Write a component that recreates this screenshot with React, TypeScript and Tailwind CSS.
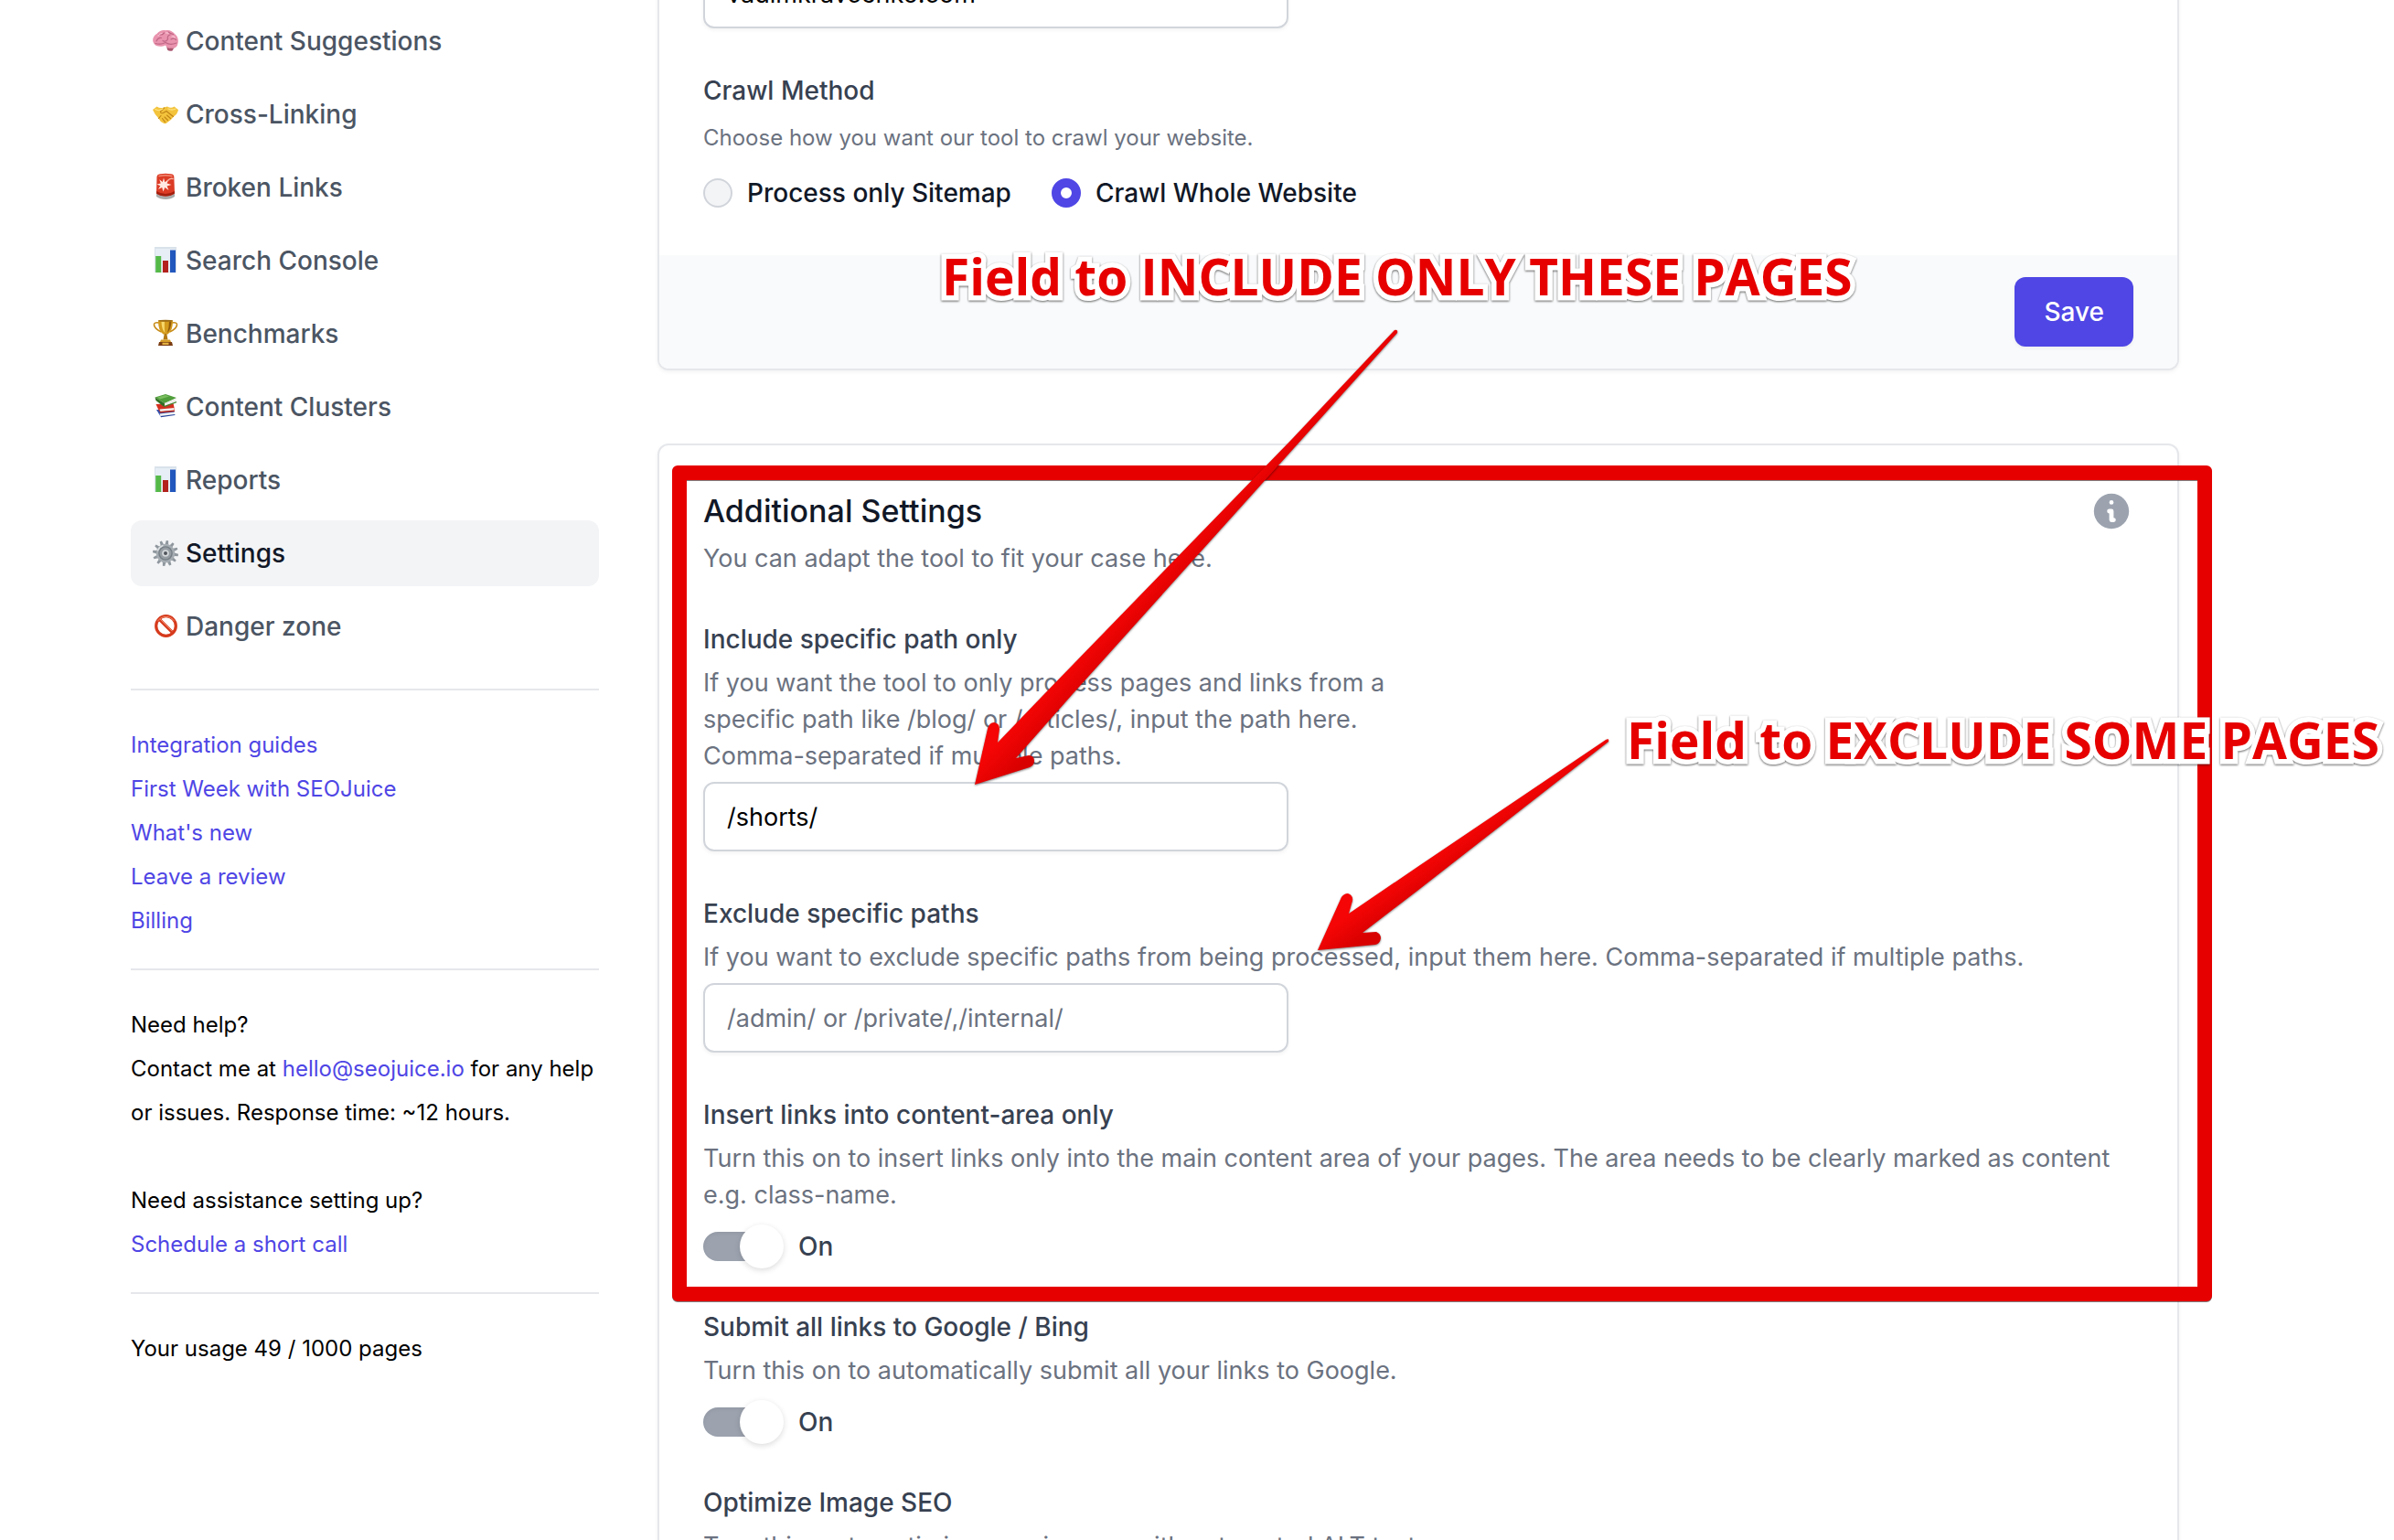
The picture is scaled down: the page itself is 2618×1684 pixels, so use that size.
import { useState } from "react";
import type { ReactNode } from "react";

const BrainIcon = () => (
  <svg viewBox="0 0 28 28" className="size-7 shrink-0 overflow-visible" aria-hidden="true">
    <path d="M15 19 L16 23.5 Q18 25.5 21.5 24.5 L24 20 Z" fill="#a8566f" />
    <path
      d="M1 16 C-1 12 1 8 4.5 6 C7 2.5 11 1.5 14 2.2 C18 1.2 22 3 24 6 C27 8 29 13 27.3 17 C27 20.5 23.5 22.5 20 21.5 C17 22.5 15 20.5 14 18.5 C10 20.5 3 20.5 1 16 Z"
      fill="#e993ae"
    />
    <path
      d="M4 14 Q6 9.5 9.5 10.5 M7 6.5 Q10 8 12.5 5 M11 13.5 Q14 15.5 16.5 12 Q15.5 8 19 7 M17 4 Q19.5 6 22.5 6.5 M20 12 Q23 10 25.5 12.5 M3 16.5 Q9 18 14 15.5 Q19 19 26 16"
      fill="none"
      stroke="#bf6685"
      strokeWidth="1.2"
      strokeLinecap="round"
    />
    <path d="M6 8 Q8 5.5 10 5.5 M14.5 5 Q16.5 4.5 17 5.5 M21 9 Q23 8.5 24 10" fill="none" stroke="#f9c6d6" strokeWidth="1.2" strokeLinecap="round" />
  </svg>
);

const HandshakeIcon = () => (
  <svg viewBox="0 0 28 28" className="size-7 shrink-0 overflow-visible" aria-hidden="true">
    <path
      d="M0 9 L4.5 5.5 Q8 8 12 6.5 L16 5.5 Q20 8 23.5 5.5 L28 9 Q27 14 23.5 16 Q20 20.5 16.5 22.5 Q14 25.5 11.5 23.5 Q8 22 6.5 18.5 Q2 14 0 9 Z"
      fill="#f3c33c"
    />
    <path
      d="M12.5 7 L8.5 11 Q8.5 13.5 11.5 12.5 L15 10.5 Q19 14 22.5 16.5 M15.5 15 L19.5 18.5 M13 17 L16.5 20.5 M10.5 18.5 L13.5 22.5 M6.5 18.5 L9 15.5"
      fill="none"
      stroke="#bf8315"
      strokeWidth="1.1"
      strokeLinecap="round"
    />
    <path d="M3 8.5 Q7 11 11 8 M17 8 Q21 10 25 8" fill="none" stroke="#fde07c" strokeWidth="1.3" strokeLinecap="round" />
  </svg>
);

const SirenIcon = () => (
  <svg viewBox="0 0 28 28" className="size-7 shrink-0 overflow-visible" aria-hidden="true">
    <path d="M4 20.5 H24 V24 Q20 27 14 27 Q8 27 4 24 Z" fill="#a9abab" />
    <path d="M4.5 2 Q5 -0.5 8 -0.8 Q14 -1.6 20 -0.8 Q23 -0.5 23.3 2 L24 20.5 Q20 23.5 14 23.5 Q8 23.5 4 20.5 Z" fill="#dc3b25" />
    <path d="M4 18 Q9 21 14 21 Q19 21 24 18 V20.5 Q20 23.5 14 23.5 Q8 23.5 4 20.5 Z" fill="#a4200f" />
    <path d="M7 1.5 Q14 0 21 1.5" fill="none" stroke="#f28b74" strokeWidth="1.4" strokeLinecap="round" />
    <path d="M12 3.5 L13.3 8.2 L17 5.5 L15.6 9.6 L20.5 11 L15.6 12.6 L17.5 17 L13.3 14 L11.5 18.5 L10.2 14 L6 16 L8.3 12.2 L4.5 10.5 L8.8 9.4 L7.3 5.3 L10.8 8 Z" fill="#ffe9e2" />
    <path d="M16 7 Q19 3.5 22 4.5" fill="none" stroke="#f7b3a2" strokeWidth="1.4" strokeLinecap="round" />
  </svg>
);

const ChartIcon = () => (
  <svg viewBox="0 0 28 28" className="size-7 shrink-0 overflow-visible" aria-hidden="true">
    <rect x="2" y="-1" width="24" height="28" fill="#d9e2ea" />
    <rect x="3" y="1" width="22" height="25" fill="#e7eef5" />
    <rect x="3.2" y="9" width="6" height="18" fill="#54b948" />
    <rect x="11" y="14" width="6" height="13" fill="#b3221c" />
    <rect x="19" y="2.5" width="6" height="24.5" fill="#2257bd" />
  </svg>
);

const TrophyIcon = () => (
  <svg viewBox="0 0 28 28" className="size-7 shrink-0 overflow-visible" aria-hidden="true">
    <path d="M7 2 Q1 1 1.5 4.5 Q2.5 9 9.5 12 M21 2 Q27 1 26.5 4.5 Q25.5 9 18.5 12" fill="none" stroke="#c68a17" strokeWidth="1.6" />
    <path d="M6 -0.5 H22 Q22 11 16.5 14.5 H11.5 Q6 11 6 -0.5 Z" fill="#d39a1c" />
    <path d="M9.5 0.5 H13 Q12.5 9 13.5 13 Q9.5 9 9.5 0.5 Z" fill="#f7d76a" />
    <path d="M18 0.5 H20.5 Q20 9 16 13 Q18 7 18 0.5 Z" fill="#8f5a0c" />
    <ellipse cx="14" cy="-0.3" rx="8" ry="1" fill="#9b6a12" />
    <path d="M12.7 14 H15.3 L16.5 20.5 H11.5 Z" fill="#b07712" />
    <path d="M9 20.5 H19 L20 23 H8 Z" fill="#d49b25" />
    <path d="M7 23 H21 L22 27 H6 Z" fill="#7a3d12" />
    <rect x="10.5" y="23.7" width="7" height="2.2" fill="#e5b544" />
  </svg>
);

const BooksIcon = () => (
  <svg viewBox="0 0 28 28" className="size-7 shrink-0 overflow-visible" aria-hidden="true">
    <path d="M4 17 L8 23.5 L24 21 L23 17 Z" fill="#2f4fae" />
    <path d="M7.5 21.5 L24 19.5 L24 22.5 L9 24.8 Z" fill="#eef0f2" />
    <path d="M8.5 24 L24.3 22 V23 L9 25.3 Z" fill="#28459c" />
    <path d="M3.5 11 L7 18.5 L24 17 L22.5 10 Z" fill="#d4301f" />
    <path d="M7.5 16.5 L23.5 15 V18 L8.5 19.3 Z" fill="#f3eeea" />
    <path d="M7.5 19 L24 17.6 V19 L8 20.5 Z" fill="#b92315" />
    <path d="M2.5 3.5 L14 0 L26 4 L13 10 Z" fill="#4f9d3b" />
    <path d="M5 3.6 L14 1 L18 2.4 L8 5.6 Z" fill="#79bd5f" />
    <path d="M2.5 3.5 L13 10 L12.5 14 L3.5 7 Z" fill="#2f6f23" />
    <path d="M13 10 L25.5 5 V8.5 L13 13 Z" fill="#eeeeea" />
    <path d="M12.5 13 L26 8 V9.3 L12.5 14.2 Z" fill="#3c8529" />
  </svg>
);

const teeth = [0, 30, 60, 90, 120, 150, 180, 210, 240, 270, 300, 330];

const GearIcon = () => (
  <svg viewBox="0 0 28 28" className="size-7 shrink-0 overflow-visible" aria-hidden="true">
    {teeth.map((angle) => (
      <path key={angle} d="M12.2 4.5 L12.8 0 H15.2 L15.8 4.5 Z" fill="#8f979e" transform={`rotate(${angle + 8} 14 14)`} />
    ))}
    <circle cx="14" cy="14" r="10.3" fill="#a5acb2" />
    <circle cx="14" cy="14" r="7.8" fill="#767e85" />
    <circle cx="14" cy="14" r="6.4" fill="#969da3" />
    <circle cx="14" cy="14" r="3.8" fill="#d5d9dc" />
    <circle cx="14" cy="14" r="2" fill="#50565b" />
    <path d="M5.5 11 A9 9 0 0 1 11 5.6" fill="none" stroke="#dfe3e6" strokeWidth="1.3" strokeLinecap="round" />
  </svg>
);

const ForbiddenIcon = () => (
  <svg viewBox="0 0 28 28" className="size-7 shrink-0 overflow-visible" aria-hidden="true">
    <circle cx="14.5" cy="13.5" r="10.8" fill="none" stroke="#d63a1c" strokeWidth="3.2" />
    <path d="M7 6 L22 21" stroke="#d63a1c" strokeWidth="3.2" />
    <path d="M5.5 8 A10.8 10.8 0 0 1 23.5 8 M8.5 6.5 L21 19" fill="none" stroke="#f08a6c" strokeWidth="1" strokeLinecap="round" />
  </svg>
);

const navItems = [
  { label: "Content Suggestions", icon: <BrainIcon /> },
  { label: "Cross-Linking", icon: <HandshakeIcon /> },
  { label: "Broken Links", icon: <SirenIcon /> },
  { label: "Search Console", icon: <ChartIcon /> },
  { label: "Benchmarks", icon: <TrophyIcon /> },
  { label: "Content Clusters", icon: <BooksIcon /> },
  { label: "Reports", icon: <ChartIcon /> },
  { label: "Settings", icon: <GearIcon />, active: true },
  { label: "Danger zone", icon: <ForbiddenIcon /> },
];

const helpLinks = ["Integration guides", "First Week with SEOJuice", "What's new", "Leave a review", "Billing"];

function Sidebar() {
  return (
    <aside className="w-[512px] shrink-0 pt-[9px] text-[24px] leading-[48px] text-black">
      <nav className="flex flex-col gap-2 text-[28px] font-medium leading-[40px]">
        {navItems.map((item) => (
          <a
            key={item.label}
            href="#"
            aria-current={item.active ? "page" : undefined}
            className={`flex items-center gap-2 rounded-xl px-6 py-4 ${
              item.active ? "bg-[#f3f4f6] text-[#111827]" : "text-[#4b5563]"
            }`}
          >
            {item.icon}
            {item.label}
          </a>
        ))}
      </nav>

      <ul className="mt-8 border-t-2 border-[#e5e7eb] pt-9">
        {helpLinks.map((link) => (
          <li key={link}>
            <a href="#" className="text-[#4f46e5]">
              {link}
            </a>
          </li>
        ))}
      </ul>

      <div className="mt-7 border-t-2 border-[#e5e7eb] pt-9">
        <p>Need help?</p>
        <p className="whitespace-nowrap">
          Contact me at{" "}
          <a href="#" className="text-[#4f46e5]">
            hello@seojuice.io
          </a>{" "}
          for any help
          <br />
          or issues. Response time: ~12 hours.
        </p>
        <p className="mt-12">Need assistance setting up?</p>
        <a href="#" className="text-[#4f46e5]">
          Schedule a short call
        </a>
      </div>

      <p className="mt-7 border-t-2 border-[#e5e7eb] pt-9">Your usage 49 / 1000 pages</p>
    </aside>
  );
}

const inputClass =
  "block h-[76px] w-[640px] rounded-xl border-2 border-[#d1d5db] bg-white px-6 text-[27px] text-black shadow-[0_2px_4px_rgba(0,0,0,0.05)] placeholder:text-[#6b7280]";

function Field({ id, label, hint, children, half }: { id: string; label: string; hint: string; children?: ReactNode; half?: boolean }) {
  return (
    <div className={half ? "w-1/2" : ""}>
      <label htmlFor={id} className="block font-medium text-[#374151]">
        {label}
      </label>
      <p className="mt-2 text-[27px] text-[#6b7280]">{hint}</p>
      {children}
    </div>
  );
}

function Toggle({ id }: { id: string }) {
  const [on, setOn] = useState(true);

  return (
    <div className="mt-4 flex h-10 items-center gap-6">
      <input
        id={id}
        type="checkbox"
        checked={on}
        onChange={() => setOn(!on)}
        className="h-8 w-20 appearance-none rounded-full bg-[#9ca3af] shadow-[inset_0_2px_4px_rgba(0,0,0,0.06)] before:block before:size-12 before:-translate-y-2 before:rounded-full before:bg-white before:shadow-[0_2px_6px_rgba(0,0,0,0.14)] checked:before:translate-x-10"
      />
      <span className="font-medium text-[#374151]">{on ? "On" : "Off"}</span>
    </div>
  );
}

function CrawlCard() {
  const [method, setMethod] = useState("website");
  const options = [
    { value: "sitemap", label: "Process only Sitemap" },
    { value: "website", label: "Crawl Whole Website" },
  ];

  return (
    <section className="overflow-hidden rounded-b-xl border-2 border-t-0 border-[#e5e7eb] bg-white shadow-[0_2px_4px_rgba(0,0,0,0.05)]">
      <div className="px-12 pb-12">
        <input aria-label="Domain" defaultValue="vadimkravcenko.com" className={inputClass} />
        <fieldset className="mt-12">
          <legend className="font-medium text-[#374151]">Crawl Method</legend>
          <p className="mt-4 text-[24px] leading-[32px] text-[#6b7280]">Choose how you want our tool to crawl your website.</p>
          <div className="mt-6 flex gap-11">
            {options.map((option) => (
              <label key={option.value} className="flex items-center gap-4 font-medium text-[#111827]">
                <input
                  type="radio"
                  name="method"
                  value={option.value}
                  checked={method === option.value}
                  onChange={() => setMethod(option.value)}
                  className="size-8 appearance-none rounded-full border-2 border-[#d1d5db] bg-[#f3f4f6] checked:border-[10px] checked:border-[#4f46e5] checked:bg-white"
                />
                {option.label}
              </label>
            ))}
          </div>
        </fieldset>
      </div>
      <div className="flex justify-end bg-[#f9fafb] px-12 py-6">
        <button className="h-[76px] rounded-xl bg-[#4f46e5] px-8 font-medium text-white shadow-[0_2px_4px_rgba(0,0,0,0.05)]">
          Save
        </button>
      </div>
    </section>
  );
}

function AdditionalSettings() {
  return (
    <section className="rounded-xl border-2 border-[#e5e7eb] bg-white px-12 py-12 shadow-[0_2px_4px_rgba(0,0,0,0.05)]">
      <div className="flex items-start justify-between">
        <div>
          <h2 className="text-[34px] font-medium leading-[48px] text-[#111827]">Additional Settings</h2>
          <p className="mt-2 text-[27px] text-[#6b7280]">You can adapt the tool to fit your case here.</p>
        </div>
        <button aria-label="More information">
          <svg viewBox="0 0 20 20" fill="#9ca3af" className="size-12" aria-hidden="true">
            <path
              fillRule="evenodd"
              clipRule="evenodd"
              d="M18 10a8 8 0 11-16 0 8 8 0 0116 0zm-7-4a1 1 0 11-2 0 1 1 0 012 0zM9 9a1 1 0 000 2v3a1 1 0 001 1h1a1 1 0 100-2v-3a1 1 0 00-1-1H9z"
            />
          </svg>
        </button>
      </div>

      <div className="mt-12 flex flex-col gap-12">
        <Field
          id="include"
          half
          label="Include specific path only"
          hint="If you want the tool to only process pages and links from a specific path like /blog/ or /articles/, input the path here. Comma-separated if multiple paths."
        >
          <input id="include" defaultValue="/shorts/" className={`mt-2 ${inputClass}`} />
        </Field>
        <Field
          id="exclude"
          label="Exclude specific paths"
          hint="If you want to exclude specific paths from being processed, input them here. Comma-separated if multiple paths."
        >
          <input id="exclude" placeholder="/admin/ or /private/,/internal/" className={`mt-2 ${inputClass}`} />
        </Field>
        <Field
          id="content-area"
          label="Insert links into content-area only"
          hint="Turn this on to insert links only into the main content area of your pages. The area needs to be clearly marked as content e.g. class-name."
        >
          <Toggle id="content-area" />
        </Field>
        <Field id="submit-links" label="Submit all links to Google / Bing" hint="Turn this on to automatically submit all your links to Google.">
          <Toggle id="submit-links" />
        </Field>
        <Field id="image-seo" label="Optimize Image SEO" hint="Turn this on to optimize your images with automated ALT texts.">
          <Toggle id="image-seo" />
        </Field>
      </div>
    </section>
  );
}

const noteClass =
  "absolute whitespace-nowrap font-['Open_Sans','Noto_Sans',sans-serif] text-[55px] font-bold leading-[76px] text-[#e60000] drop-shadow-[0_1px_1px_rgba(0,0,0,0.6)] [-webkit-text-stroke:11px_white] [paint-order:stroke_fill]";

// Red frame, arrows and captions drawn over the page
function Annotations() {
  return (
    <div className="pointer-events-none absolute inset-0">
      <div className="absolute left-[735px] top-[509px] h-[914px] w-[1684px] rounded-md border-16 border-[#e60000] drop-shadow-[0_1px_0_rgba(0,0,0,0.5)]" />
      <svg className="absolute inset-0 size-full drop-shadow-[0_1px_1px_rgba(0,0,0,0.5)]" aria-hidden="true">
        <defs>
          <linearGradient id="arrow-long" gradientUnits="userSpaceOnUse" x1="1104" y1="798" x2="1130" y2="822">
            <stop offset="0" stopColor="#f50505" />
            <stop offset="1" stopColor="#d90000" />
          </linearGradient>
          <linearGradient id="arrow-short" gradientUnits="userSpaceOnUse" x1="1500" y1="984" x2="1517" y2="1008">
            <stop offset="0" stopColor="#f50505" />
            <stop offset="1" stopColor="#d90000" />
          </linearGradient>
        </defs>
        <path
          d="M1066 858 L1080 797 Q1082 790 1087 790 Q1093 791 1093 797 L1091 812 L1141 760 L1413 480 L1525 361 Q1529 360 1528 364 L1424 480 L1172 760 L1111 829 L1125 826 Q1131 826 1131 832 Q1131 837 1126 839 Z"
          fill="url(#arrow-long)"
        />
        <path
          d="M1441 1039 L1467 981 Q1470 977 1474 977 Q1480 979 1479 985 L1475 999 L1550 948 L1756 809 Q1760 807 1759 811 L1550 974 L1490 1020 L1505 1019 Q1510 1021 1510 1026 Q1509 1032 1504 1033 Z"
          fill="url(#arrow-short)"
        />
      </svg>
      <p className={`left-[1030px] top-[264px] ${noteClass}`}>Field to INCLUDE ONLY THESE PAGES</p>
      <p className={`left-[1779px] top-[771px] ${noteClass}`}>Field to EXCLUDE SOME PAGES</p>
    </div>
  );
}

export default function App() {
  return (
    <div className="relative h-screen overflow-hidden bg-white font-['Inter',sans-serif] text-[28px] leading-[40px]">
      <div className="flex gap-16 pl-[143px] pr-[235px]">
        <Sidebar />
        <main className="-mt-[45px] flex min-w-0 flex-1 flex-col gap-20">
          <CrawlCard />
          <AdditionalSettings />
        </main>
      </div>
      <Annotations />
    </div>
  );
}
